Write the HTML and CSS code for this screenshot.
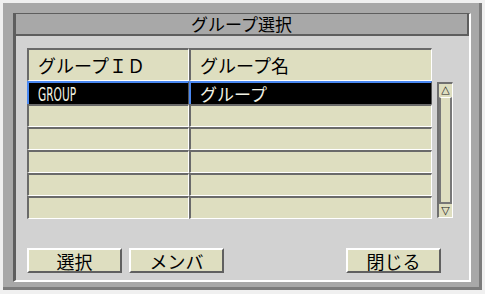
FILE: index.html
```html
<!DOCTYPE html>
<html lang="ja">
<head>
    <meta charset="UTF-8">
    <title>グループ選択</title>
    <link rel="stylesheet" href="styles.css">
</head>
<body>
    <div class="window">
        <div class="panel">
            <div class="title">グループ選択</div>

            <!-- list of groups with its scroll bar -->
            <div class="list-area">
                <div class="table">
                    <div class="row head">
                        <div class="cell col-id">グループＩＤ</div>
                        <div class="cell col-name">グループ名</div>
                    </div>
                    <div class="row selected">
                        <div class="cell col-id"><span class="code">GROUP</span></div>
                        <div class="cell col-name">グループ</div>
                    </div>
                    <div class="row">
                        <div class="cell col-id"></div>
                        <div class="cell col-name"></div>
                    </div>
                    <div class="row">
                        <div class="cell col-id"></div>
                        <div class="cell col-name"></div>
                    </div>
                    <div class="row">
                        <div class="cell col-id"></div>
                        <div class="cell col-name"></div>
                    </div>
                    <div class="row">
                        <div class="cell col-id"></div>
                        <div class="cell col-name"></div>
                    </div>
                    <div class="row">
                        <div class="cell col-id"></div>
                        <div class="cell col-name"></div>
                    </div>
                </div>

                <div class="scroll">
                    <div class="arrow">△</div>
                    <div class="thumb"></div>
                    <div class="arrow">▽</div>
                </div>
            </div>

            <div class="buttons">
                <button type="button" class="btn">選択</button>
                <button type="button" class="btn">メンバ</button>
                <button type="button" class="btn close">閉じる</button>
            </div>
        </div>
    </div>
</body>
</html>
```

FILE: styles.css
```css
* {
    box-sizing: border-box;
}

body {
    margin: 0;
    background-color: #f0f0f0;
    font-family: "Noto Sans CJK JP", "DejaVu Sans", sans-serif;
    color: #000;
}

.window {
    margin: 3px;
    width: 479px;
    height: 287px;
    padding: 10px 8px 5px 10px;
    background-color: #a8a8a8;
    border-right: 3px solid #7c7c7c;
    border-bottom: 3px solid #7c7c7c;
}

.panel {
    width: 458px;
    height: 269px;
    display: flex;
    flex-direction: column;
    background-color: #d2d2d2;
    border-left: 3px solid #5e5e5e;
    border-top: 1px solid #5e5e5e;
    border-right: 2px solid #fff;
    border-bottom: 2px solid #fff;
}

.title {
    height: 22px;
    line-height: 20px;
    font-size: 17px;
    text-align: center;
    background-color: #a8a8a8;
    border-right: 2px solid #5e5e5e;
    border-bottom: 2px solid #5e5e5e;
}

.list-area {
    display: flex;
    gap: 5px;
    margin: 12px 0 0 11px;
}

.table {
    width: 405px;
    display: flex;
    flex-direction: column;
}

.row {
    display: flex;
    height: 23px;
}

.row.head {
    height: 33px;
}

.cell {
    height: 100%;
    padding-left: 9px;
    background-color: #dedec0;
    border-top: 2px solid #6a6a6a;
    border-left: 2px solid #6a6a6a;
    border-right: 1px solid #fff;
    border-bottom: 1px solid #fff;
    font-size: 17px;
    line-height: 20px;
    white-space: nowrap;
}

.head .cell {
    line-height: 30px;
    font-size: 18px;
}

.col-id {
    width: 162px;
}

.col-name {
    width: 243px;
}

.selected .cell {
    background-color: #000;
    color: #f2f2e4;
    border-top-color: #4a88f2;
    border-left-color: #4a88f2;
    border-right-color: #555;
    border-bottom: 0;
    line-height: 21px;
}

.code {
    display: inline-block;
    font-family: "DejaVu Sans Condensed", "DejaVu Sans", sans-serif;
    font-size: 19px;
    transform: scaleX(0.62);
    transform-origin: left center;
}

.scroll {
    width: 16px;
    height: 136px;
    margin-top: 34px;
    display: flex;
    flex-direction: column;
    background-color: #dedec0;
    border-left: 2px solid #707070;
    border-top: 2px solid #707070;
    border-right: 1px solid #fff;
    border-bottom: 1px solid #fff;
}

.arrow {
    height: 12px;
    font-family: "DejaVu Sans", sans-serif;
    font-size: 11px;
    line-height: 12px;
    text-align: center;
    color: #222;
}

.thumb {
    flex: 1;
    margin: 1px 0;
    border-top: 1px solid #fff;
    border-left: 2px solid #777;
    border-right: 2px solid #777;
    border-bottom: 2px solid #777;
}

.buttons {
    display: flex;
    gap: 7px;
    margin: 29px 28px 0 11px;
}

.btn {
    width: 95px;
    height: 25px;
    padding: 0;
    background-color: #dedec0;
    border-top: 2px solid #fff;
    border-left: 2px solid #fff;
    border-right: 2px solid #606060;
    border-bottom: 2px solid #606060;
    font-family: "Noto Sans CJK JP", "DejaVu Sans", sans-serif;
    font-size: 18px;
    line-height: 20px;
    color: #000;
}

.btn.close {
    margin-left: auto;
}
```
